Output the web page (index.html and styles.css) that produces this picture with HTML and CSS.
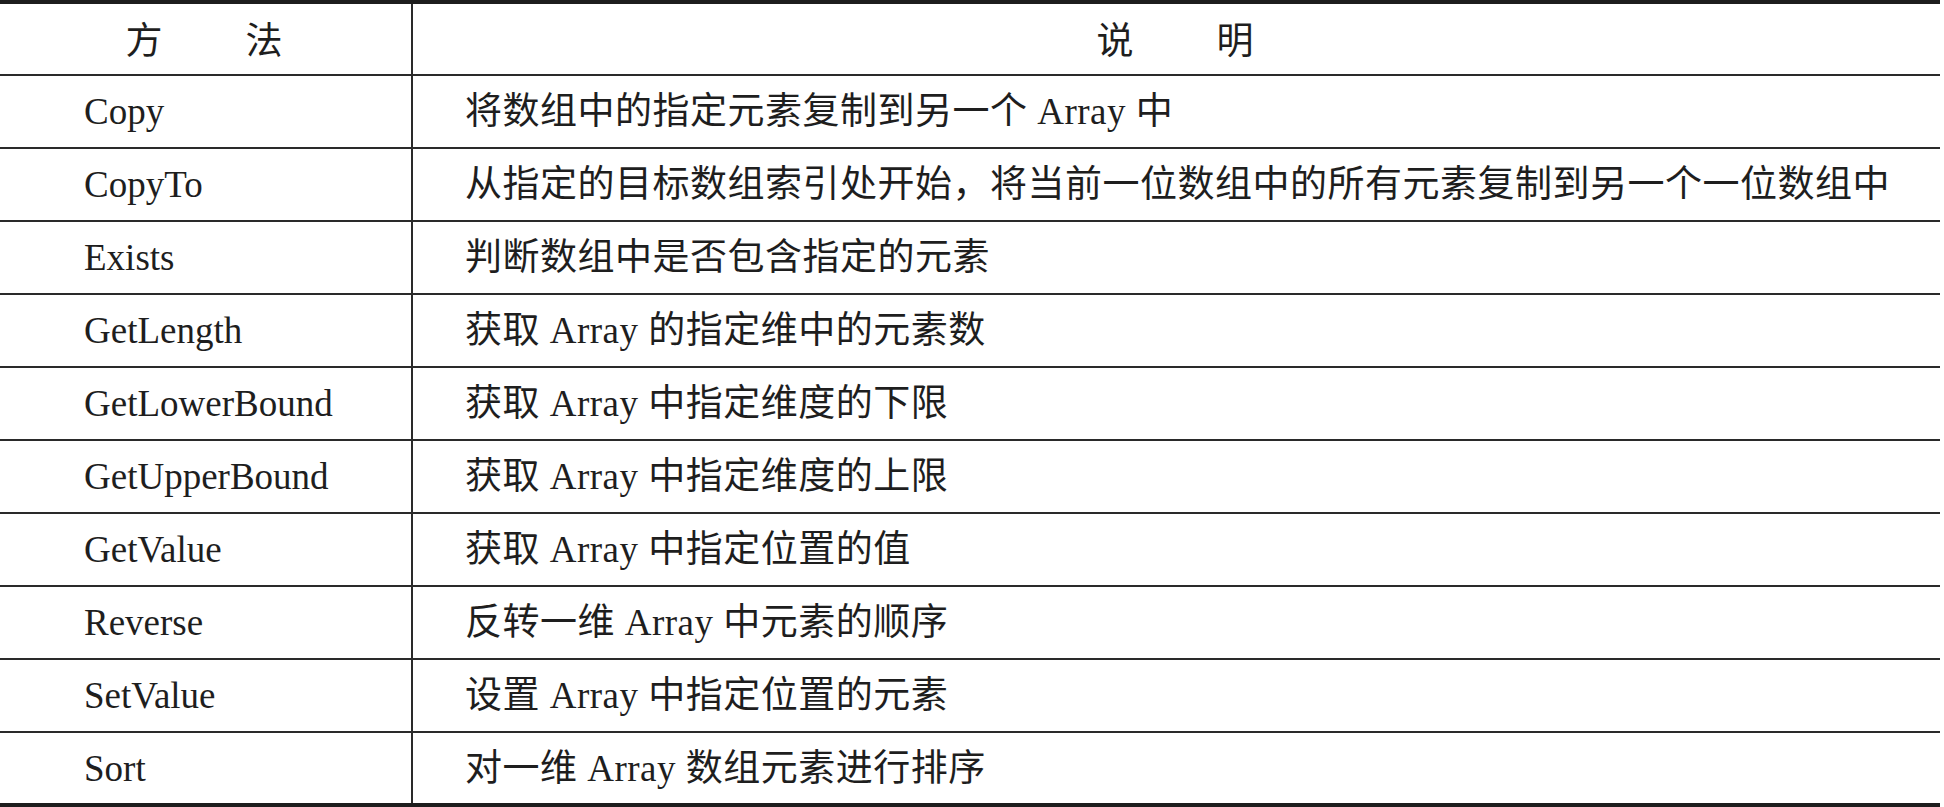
FILE: index.html
```html
<!DOCTYPE html>
<html lang="zh-CN">
<head>
<meta charset="utf-8">
<title>Array 方法</title>
<link rel="stylesheet" href="styles.css">
</head>
<body>
<div class="table">
  <div class="row head">
    <div class="cell name">方　　法</div>
    <div class="cell desc">说　　明</div>
  </div>
  <div class="row">
    <div class="cell name">Copy</div>
    <div class="cell desc">将数组中的指定元素复制到另一个 Array 中</div>
  </div>
  <div class="row">
    <div class="cell name">CopyTo</div>
    <div class="cell desc">从指定的目标数组索引处开始，将当前一位数组中的所有元素复制到另一个一位数组中</div>
  </div>
  <div class="row">
    <div class="cell name">Exists</div>
    <div class="cell desc">判断数组中是否包含指定的元素</div>
  </div>
  <div class="row">
    <div class="cell name">GetLength</div>
    <div class="cell desc">获取 Array 的指定维中的元素数</div>
  </div>
  <div class="row">
    <div class="cell name">GetLowerBound</div>
    <div class="cell desc">获取 Array 中指定维度的下限</div>
  </div>
  <div class="row">
    <div class="cell name">GetUpperBound</div>
    <div class="cell desc">获取 Array 中指定维度的上限</div>
  </div>
  <div class="row">
    <div class="cell name">GetValue</div>
    <div class="cell desc">获取 Array 中指定位置的值</div>
  </div>
  <div class="row">
    <div class="cell name">Reverse</div>
    <div class="cell desc">反转一维 Array 中元素的顺序</div>
  </div>
  <div class="row">
    <div class="cell name">SetValue</div>
    <div class="cell desc">设置 Array 中指定位置的元素</div>
  </div>
  <div class="row last">
    <div class="cell name">Sort</div>
    <div class="cell desc">对一维 Array 数组元素进行排序</div>
  </div>
</div>
</body>
</html>
```

FILE: styles.css
```css
html, body {
  margin: 0;
  padding: 0;
  background: #ffffff;
}

body {
  font-family: "Liberation Serif", "Noto Sans CJK SC", serif;
  font-size: 37px;
  color: #1e1e1e;
}

.table {
  width: 1940px;
  border-top: 4px solid #1d1d1d;
  border-bottom: 4px solid #1d1d1d;
}

.row {
  display: flex;
  height: 73px;
  box-sizing: border-box;
  border-bottom: 2px solid #2a2a2a;
}

.row.head {
  height: 72px;
}

.row.last {
  height: 70px;
  border-bottom: none;
}

.cell {
  display: flex;
  align-items: center;
  line-height: 1;
  white-space: nowrap;
}

.cell.name {
  width: 413px;
  flex: none;
  box-sizing: border-box;
  padding-left: 84px;
  border-right: 2px solid #2a2a2a;
}

.cell.desc {
  flex: 1;
  padding-left: 52px;
  letter-spacing: 0.5px;
}

.head .cell {
  justify-content: center;
  padding-left: 0;
  font-family: "Noto Sans CJK SC", sans-serif;
  letter-spacing: 3px;
  padding-bottom: 2px;
}
```
